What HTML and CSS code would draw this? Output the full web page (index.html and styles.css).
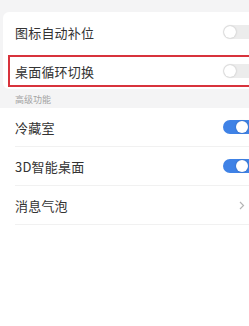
FILE: index.html
```html
<!DOCTYPE html>
<html>
<head>
<meta charset="utf-8">
<link rel="stylesheet" href="styles.css">
</head>
<body>
<div class="page">
  <div class="card top">
    <div class="row">
      <span class="label">图标自动补位</span>
      <span class="toggle off"><span class="knob"></span></span>
    </div>
    <div class="row boxed">
      <span class="label">桌面循环切换</span>
      <span class="toggle off"><span class="knob"></span></span>
    </div>
  </div>
  <div class="section">高级功能</div>
  <div class="card bottom">
    <div class="row line">
      <span class="label">冷藏室</span>
      <span class="toggle on"><span class="knob"></span></span>
    </div>
    <div class="row line">
      <span class="label">3D智能桌面</span>
      <span class="toggle on"><span class="knob"></span></span>
    </div>
    <div class="row line">
      <span class="label">消息气泡</span>
      <svg class="chev" width="6" height="9" viewBox="0 0 6 9"><path d="M1 1 L4.5 4.5 L1 8" fill="none" stroke="#b5b5b5" stroke-width="1.2"/></svg>
    </div>
  </div>
</div>
</body>
</html>
```
FILE: styles.css
```css
html, body {
  margin: 0;
  padding: 0;
  background: #ffffff;
}
body {
  font-family: "Noto Sans CJK SC", "Noto Sans", sans-serif;
  width: 249px;
  height: 326px;
  overflow: hidden;
}
.page {
  background: #f4f4f5;
  padding-top: 12px;
  height: 314px;
  display: flex;
  flex-direction: column;
}
.card {
  background: #ffffff;
  margin-left: 3px;
  border-radius: 6px 0 0 6px;
}
.card.top {
  height: 77px;
}
.card.bottom {
  flex: 1;
  border-radius: 0;
  margin-left: 0;
  padding-left: 3px;
}
.row {
  display: flex;
  align-items: center;
  justify-content: space-between;
  height: 40px;
  padding-left: 12px;
  position: relative;
}
.row.boxed {
  height: 28px;
  margin-top: 3px;
  margin-left: 5px;
  padding-left: 5px;
  border: 2px solid #d8333c;
  border-right: none;
}
.row.line {
  height: 38px;
  border-bottom: 1px solid #f1f1f1;
  padding-left: 0;
  margin-left: 12px;
}
.label {
  font-size: 13px;
  color: #333333;
  letter-spacing: 0.2px;
}
.section {
  height: 16px;
  padding-top: 3px;
  line-height: 16px;
  padding-left: 15px;
  font-size: 9px;
  color: #a3a3a3;
}
.toggle {
  width: 34px;
  height: 14px;
  border-radius: 7px;
  margin-right: -8px;
  position: relative;
  flex: none;
}
.toggle.off {
  background: #ececec;
}
.toggle.on {
  background: #3f82e6;
}
.knob {
  position: absolute;
  top: 1px;
  width: 12px;
  height: 12px;
  border-radius: 50%;
  background: #ffffff;
  box-shadow: 0 0 2px rgba(0,0,0,0.25);
}
.toggle.off .knob {
  left: 1px;
}
.toggle.on .knob {
  left: 13px;
}
.chev {
  margin-right: 4px;
}
```
